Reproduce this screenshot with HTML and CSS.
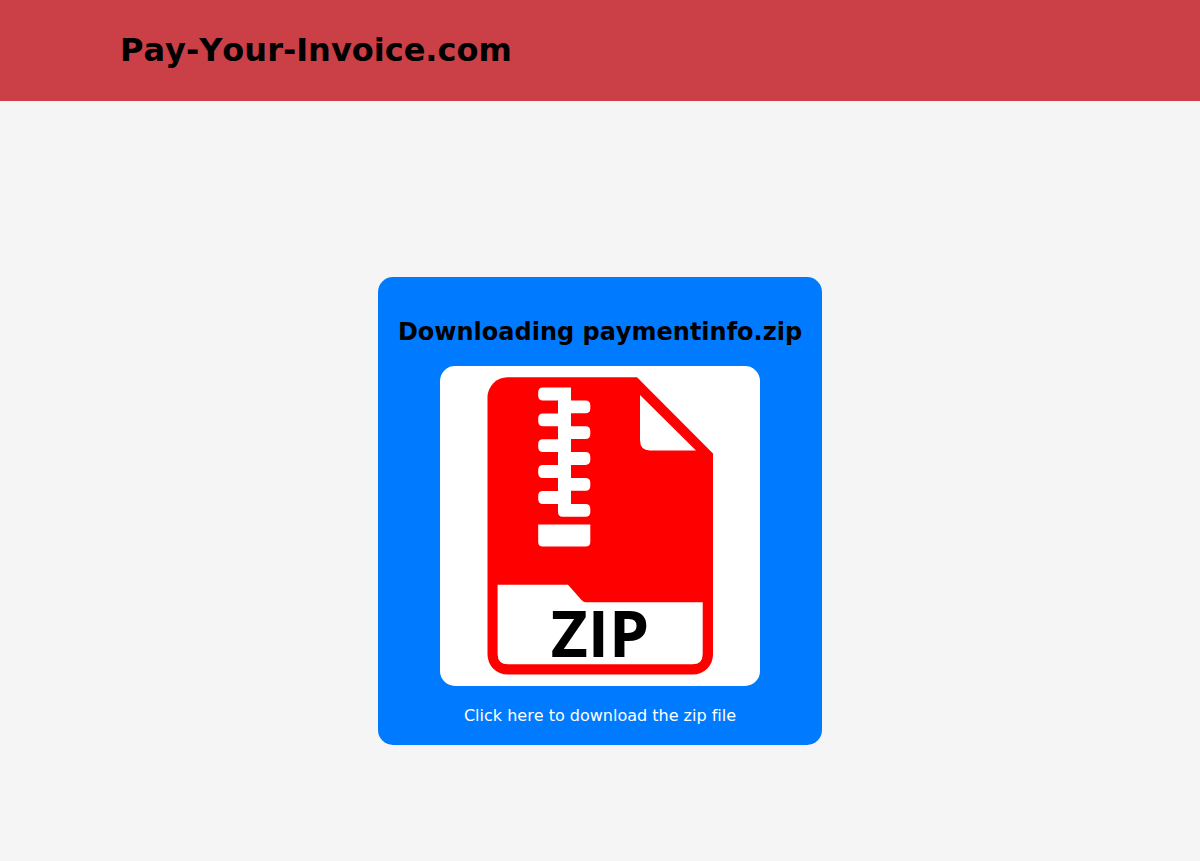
FILE: index.html
```html
<!DOCTYPE html>
<html lang="en">
<head>
<meta charset="utf-8">
<meta name="viewport" content="width=device-width, initial-scale=1">
<title>Pay-Your-Invoice.com</title>
<link rel="stylesheet" href="styles.css">
</head>
<body>
<header class="site-header">
  <div class="container">
    <h1 class="site-title">Pay-Your-Invoice.com</h1>
  </div>
</header>
<main class="content">
  <section class="card">
    <h2 class="card-title">Downloading paymentinfo.zip</h2>
    <svg class="file-icon" viewBox="0 0 320 320" role="img" aria-label="ZIP file">
      <path fill="#f00" d="M67.500 11.300H197L273 87.500V288.500A20 20 0 0 1 253 308.500H67.500A20 20 0 0 1 47.500 288.500V31.300A20 20 0 0 1 67.500 11.300Z"/>
      <path fill="#fff" d="M200 29L256 84.500H210Q200 84.500 200 74Z"/>
      <path fill="#fff" d="M131 21.400V34.500H145.500Q150.300 34.500 150.300 39.500V42.500Q150.300 47.300 145.500 47.300H131V60.300H145.500Q150.300 60.300 150.300 65.300V68.300Q150.300 73.100 145.500 73.100H131V86.100H145.500Q150.300 86.100 150.300 91.100V94.100Q150.300 98.900 145.500 98.900H131V112H145.500Q150.300 112 150.300 117V120Q150.300 124.800 145.500 124.800H131V138H145.500Q150.300 138 150.300 143V146Q150.300 150.700 145.500 150.700H122.500Q118 150.700 118 146V138H103Q98.200 138 98.200 133V130Q98.200 125 103 125H118V112H103Q98.200 112 98.200 107V104Q98.200 99 103 99H118V86.100H103Q98.200 86.100 98.200 81V78Q98.200 73.200 103 73.200H118V60.300H103Q98.200 60.300 98.200 55.300V52.300Q98.200 47.400 103 47.400H118V34.500H103Q98.200 34.500 98.200 29.500V26.500Q98.200 21.400 103 21.400Z"/>
      <path fill="#fff" d="M98.200 158.500H150.300V176Q150.300 180.500 145.500 180.500H103Q98.200 180.500 98.200 176Z"/>
      <path fill="#fff" d="M57.600 218.700H128L141.500 234Q143.500 236.200 146 236.200H262.700V288Q262.700 298.300 252.500 298.300H68Q57.600 298.300 57.600 288Z"/>
      <text class="file-label" x="160" y="291" text-anchor="middle">ZIP</text>
    </svg>
    <a class="download-link" href="#">Click here to download the zip file</a>
  </section>
</main>
</body>
</html>
```
FILE: styles.css
```css
body {
  margin: 0;
  background: #f5f5f5;
  color: #000;
  font-family: "DejaVu Sans", sans-serif;
  font-size: 16px;
  font-kerning: none;
  font-variant-ligatures: none;
}

.site-header {
  padding: 32px 0;
  background: #cb3f47;
}

.container {
  width: 80%;
  margin: 0 auto;
}

.site-title {
  margin: 0;
  font-size: 32px;
  line-height: 37px;
}

.content {
  display: flex;
  justify-content: center;
  padding: 176px 20px 40px;
}

.card {
  display: flex;
  flex-direction: column;
  align-items: center;
  gap: 20px;
  padding: 41px 20px 20px;
  border-radius: 15px;
  background: #007bff;
  text-align: center;
}

.card-title {
  margin: 0;
  font-size: 24px;
  line-height: 28px;
}

.file-icon {
  width: 320px;
  max-width: 100%;
  border-radius: 15px;
  background: #fff;
}

.file-label {
  font-family: "Open Sans", sans-serif;
  font-size: 64px;
  font-weight: 700;
}

.download-link {
  color: #fff;
  line-height: 19px;
  text-decoration: none;
}
```
